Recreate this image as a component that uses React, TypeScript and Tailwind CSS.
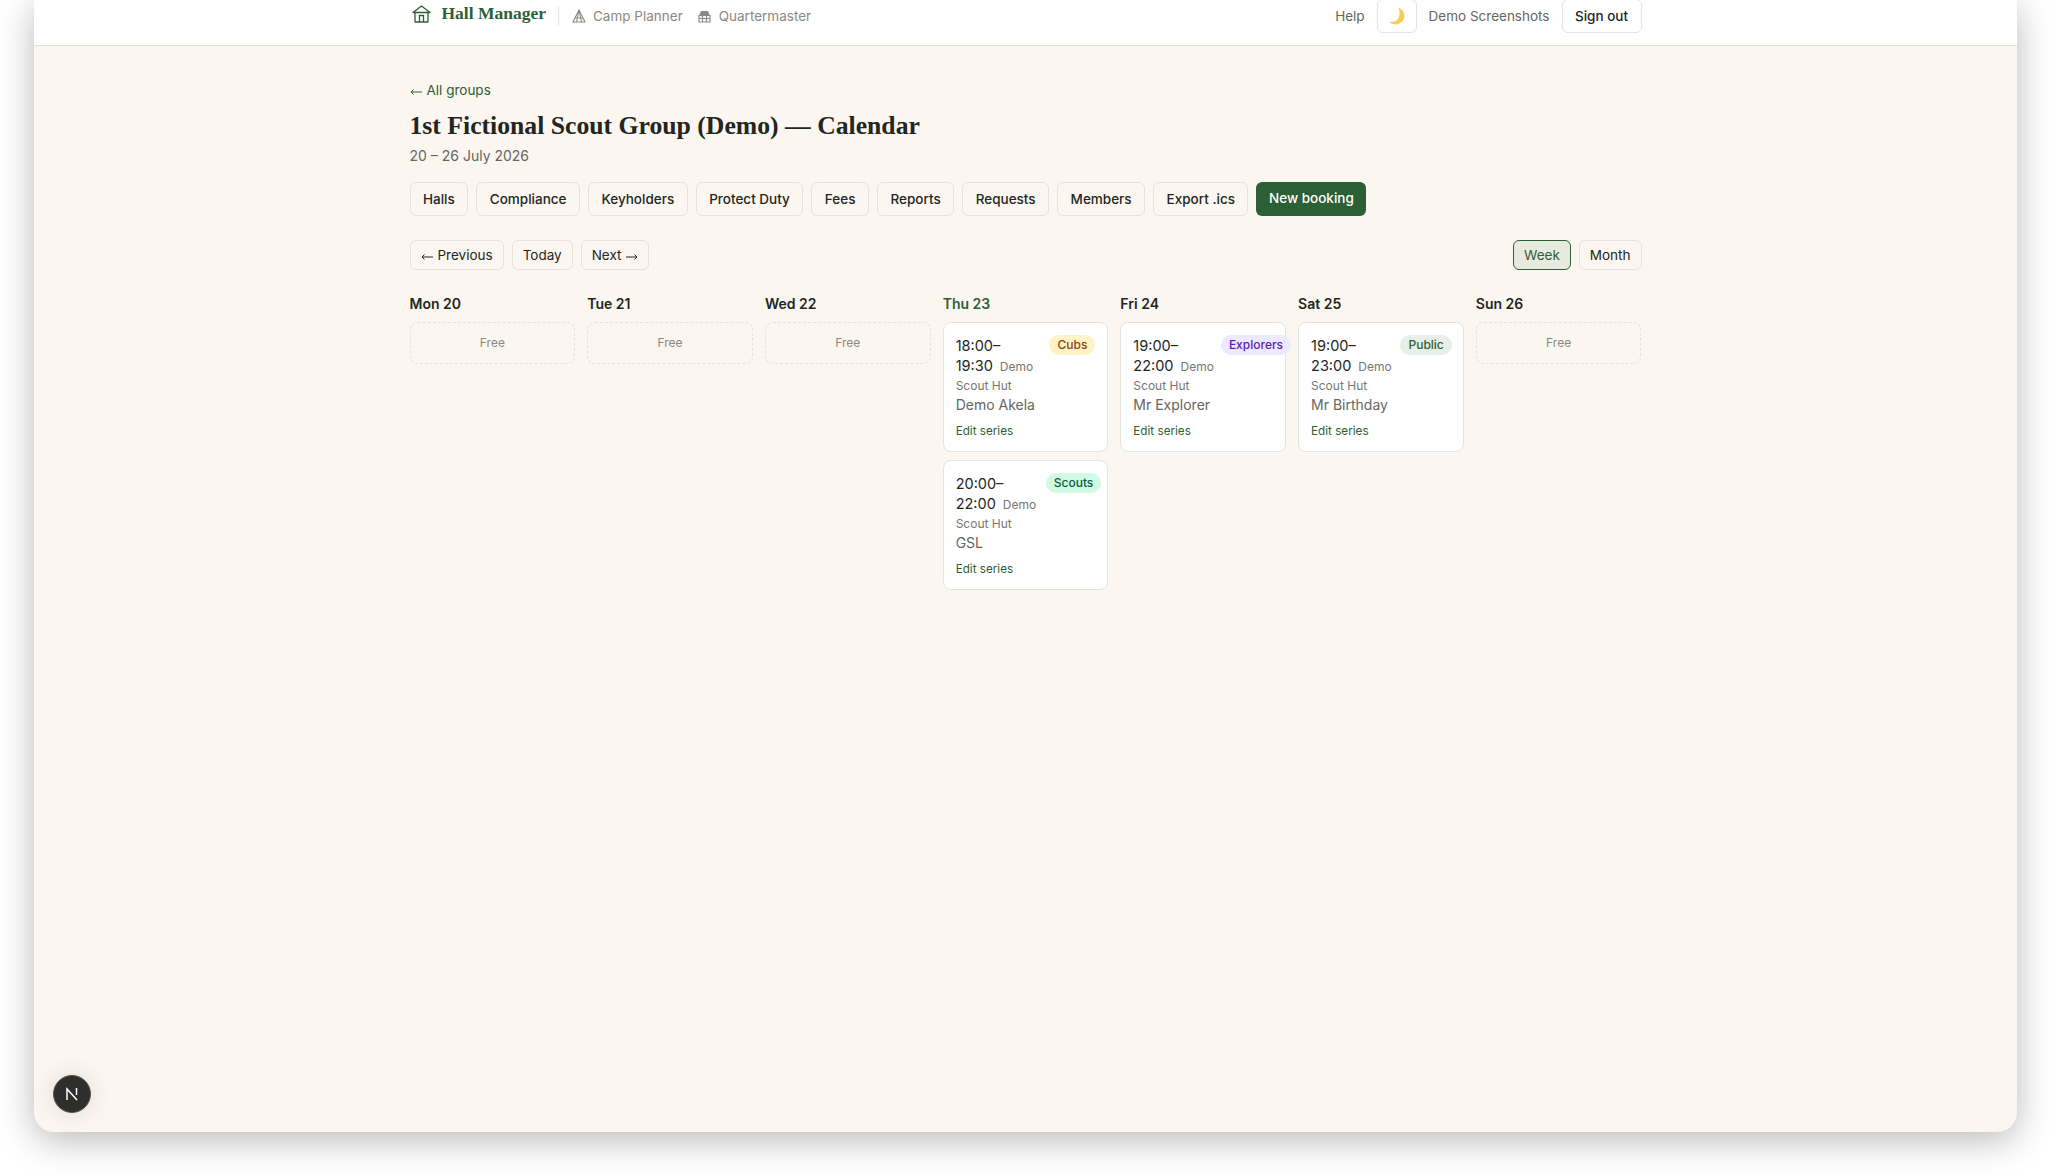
import { ReactNode } from 'react'

const green = 'text-[#2d5f35]'

interface Booking {
  start: string
  end: string
  who: string
  label: string
  badge: string
}

interface Day {
  name: string
  today?: boolean
  bookings: Booking[]
}

const days: Day[] = [
  { name: 'Mon 20', bookings: [] },
  { name: 'Tue 21', bookings: [] },
  { name: 'Wed 22', bookings: [] },
  {
    name: 'Thu 23',
    today: true,
    bookings: [
      { start: '18:00', end: '19:30', who: 'Demo Akela', label: 'Cubs', badge: 'right-[12px] bg-[#fef3c7] text-[#92400e]' },
      { start: '20:00', end: '22:00', who: 'GSL', label: 'Scouts', badge: 'right-[6px] bg-[#d1fae5] text-[#065f46]' },
    ],
  },
  {
    name: 'Fri 24',
    bookings: [
      { start: '19:00', end: '22:00', who: 'Mr Explorer', label: 'Explorers', badge: '-right-[6px] bg-[#ede9fe] text-[#5b21b6]' },
    ],
  },
  {
    name: 'Sat 25',
    bookings: [
      { start: '19:00', end: '23:00', who: 'Mr Birthday', label: 'Public', badge: 'right-[11px] bg-[#e8eee8] text-[#2d5f35]' },
    ],
  },
  { name: 'Sun 26', bookings: [] },
]

const tabs = ['Halls', 'Compliance', 'Keyholders', 'Protect Duty', 'Fees', 'Reports', 'Requests', 'Members', 'Export .ics']

const HouseIcon = () => (
  <svg width="19" height="18" viewBox="0 0 19 18" fill="none" stroke="#2d5f35" strokeWidth="1.3" strokeLinejoin="round">
    <path d="M1 7.500 9.500 1 18 7.500Z" />
    <path d="M3 7.500V17H16V7.500" />
    <path d="M7.500 17V10.500H11.500V17" />
  </svg>
)

const TentIcon = () => (
  <svg width="14" height="14" viewBox="0 0 14 14" fill="none" stroke="#8a8a84" strokeWidth="1.1">
    <path d="M7 1 1 13H13Z" />
    <path d="M7 1 4.500 13M7 1 9.500 13M3 9H11" />
  </svg>
)

const StoreIcon = () => (
  <svg width="13" height="13" viewBox="0 0 13 13" fill="none" stroke="#8a8a84" strokeWidth="1.2">
    <path d="M3.500 1.500H9.500L11 5H2Z" fill="#8a8a84" />
    <path d="M1 5.500H12V12H1ZM1 8.500H12M4.500 5.500V12M8.500 5.500V12" />
  </svg>
)

const MoonIcon = () => (
  <svg width="18" height="18" viewBox="0 0 16 16">
    <path d="M9 .500C13 2 15 5.500 14.500 9.200 14 13 10.500 15.500 6.500 15.500 4.300 15.500 2.300 14.600 1 13.200 4.800 13.800 8.400 12.400 9.700 9 10.800 6.200 10.500 3.200 9 .500Z" fill="#f6cf4d" />
  </svg>
)

const ArrowLeft = () => (
  <svg className="mr-[5px] inline-block align-[-1px]" width="12" height="8" viewBox="0 0 12 8" fill="none" stroke="currentColor" strokeWidth="1">
    <path d="M12 4H1M3.500 1.500 1 4l2.500 2.500" />
  </svg>
)

const ArrowRight = () => (
  <svg className="ml-[5px] inline-block align-[-1px]" width="12" height="8" viewBox="0 0 12 8" fill="none" stroke="currentColor" strokeWidth="1">
    <path d="M0 4H11M8.500 1.500 11 4 8.500 6.500" />
  </svg>
)

const OutlineButton = ({ children, active }: { children: ReactNode; active?: boolean }) => (
  <button
    className={
      active
        ? 'h-[30px] rounded-md border border-[#2d5f35] bg-[#e8eadf] px-2.5 text-[13.5px] text-[#2d5f35]'
        : 'h-[30px] rounded-md border border-[#e5e2dc] px-2.5 text-[13.5px] text-[#22261f]'
    }
  >
    {children}
  </button>
)

const BookingCard = ({ booking }: { booking: Booking }) => (
  <div className="relative flex h-[130px] flex-col rounded-lg border border-[#e5e3df] bg-white px-3 pt-[13px]">
    <span className={`absolute top-[12px] flex h-5 items-center rounded-full px-2 text-xs font-medium ${booking.badge}`}>
      {booking.label}
    </span>
    <p className="text-[14.5px] leading-5 text-[#22261f]">
      {booking.start}–
      <br />
      {booking.end}
      <span className="ml-[7px] text-xs text-[#77776f]">Demo</span>
    </p>
    <p className="text-xs leading-5 text-[#77776f]">Scout Hut</p>
    <p className="-mt-[1px] text-[14px] leading-5 text-[#66665f]">{booking.who}</p>
    <a className={`mt-[6px] text-[11.7px] leading-5 ${green}`}>Edit series</a>
  </div>
)

export default function App() {
  return (
    <div className="h-[1174px] overflow-hidden bg-white px-[34px] pb-[42px] font-['Inter',sans-serif]">
      <div className="relative h-full overflow-hidden rounded-b-[20px] bg-[#fbf6f0] shadow-[0_8px_36px_rgba(0,0,0,0.28)]">
        <header className="h-[46px] border-b border-[#e5e3df] bg-white">
          <div className="mx-auto flex h-[32px] max-w-[1280px] items-center justify-between px-6">
            <div className="flex items-center">
              <div className="-mt-[5px] flex items-center gap-[11px] pl-[2px]">
                <HouseIcon />
                <span className={`font-['Liberation_Serif',serif] text-[17.5px] font-bold ${green}`}>Hall Manager</span>
              </div>
              <div className="ml-3 h-5 w-px bg-[#e5e3df]" />
              <div className="ml-[13px] flex items-center gap-[7px] text-[13.5px] text-[#8a8a84]">
                <TentIcon />
                Camp Planner
              </div>
              <div className="ml-[15px] flex items-center gap-[8px] text-[13.5px] text-[#8a8a84]">
                <StoreIcon />
                Quartermaster
              </div>
            </div>
            <div className="flex items-center text-[13.5px]">
              <span className="text-[#66665f]">Help</span>
              <button className="ml-3 flex h-[34px] w-10 items-center justify-center rounded-md border border-[#e5e3df]">
                <MoonIcon />
              </button>
              <span className="ml-3 text-[#66665f]">Demo Screenshots</span>
              <button className="ml-3 h-[34px] w-20 rounded-md border border-[#e5e3df] font-medium text-[#22261f]">
                Sign out
              </button>
            </div>
          </div>
        </header>

        <main className="mx-auto max-w-[1280px] px-6 pt-[35px]">
          <a className={`block text-[13.5px] leading-[18px] ${green}`}>
            <ArrowLeft />
            All groups
          </a>
          <h1 className="mt-[11px] font-['Liberation_Serif',serif] text-[25.7px] leading-8 font-bold text-[#22261f]">
            1st Fictional Scout Group (Demo) — Calendar
          </h1>
          <p className="mt-[4px] text-[14px] leading-5 text-[#66665f]">20 – 26 July 2026</p>

          <div className="mt-[16px] flex gap-2">
            {tabs.map((tab) => (
              <button key={tab} className="h-[34px] rounded-md border border-[#e5e2dc] px-[12.5px] text-[13.5px] font-medium text-[#22261f]">
                {tab}
              </button>
            ))}
            <button className="h-[34px] rounded-md bg-[#2d5f35] px-[12.5px] pb-[2px] text-[13.5px] font-medium text-white">New booking</button>
          </div>

          <div className="mt-6 flex justify-between">
            <div className="flex gap-2">
              <OutlineButton>
                <ArrowLeft />
                Previous
              </OutlineButton>
              <OutlineButton>Today</OutlineButton>
              <OutlineButton>
                Next
                <ArrowRight />
              </OutlineButton>
            </div>
            <div className="flex gap-2">
              <OutlineButton active>Week</OutlineButton>
              <OutlineButton>Month</OutlineButton>
            </div>
          </div>

          <div className="mt-6 grid grid-cols-7 gap-3">
            {days.map((day) => (
              <div key={day.name}>
                <h2 className={`text-[14px] leading-5 font-semibold ${day.today ? green : 'text-[#22261f]'}`}>{day.name}</h2>
                <div className="mt-[8px] flex flex-col gap-2">
                  {day.bookings.length === 0 && (
                    <div className="flex h-[42px] items-center justify-center rounded-lg border border-dashed border-[#e5e2dc] text-xs text-[#8a8a84]">
                      Free
                    </div>
                  )}
                  {day.bookings.map((booking) => (
                    <BookingCard key={booking.start} booking={booking} />
                  ))}
                </div>
              </div>
            ))}
          </div>
        </main>

        <div className="absolute bottom-[19px] left-[19px] flex h-[38px] w-[38px] items-center justify-center rounded-full border border-[#55554f] bg-[#2e2e2c] shadow-[0_0_24px_rgba(0,0,0,0.12)]">
          <svg width="14" height="14" viewBox="0 0 14 14" fill="none" stroke="white" strokeWidth="1.5">
            <path d="M2 13V2L12 13M11.500 1V8" />
          </svg>
        </div>
      </div>
    </div>
  )
}
